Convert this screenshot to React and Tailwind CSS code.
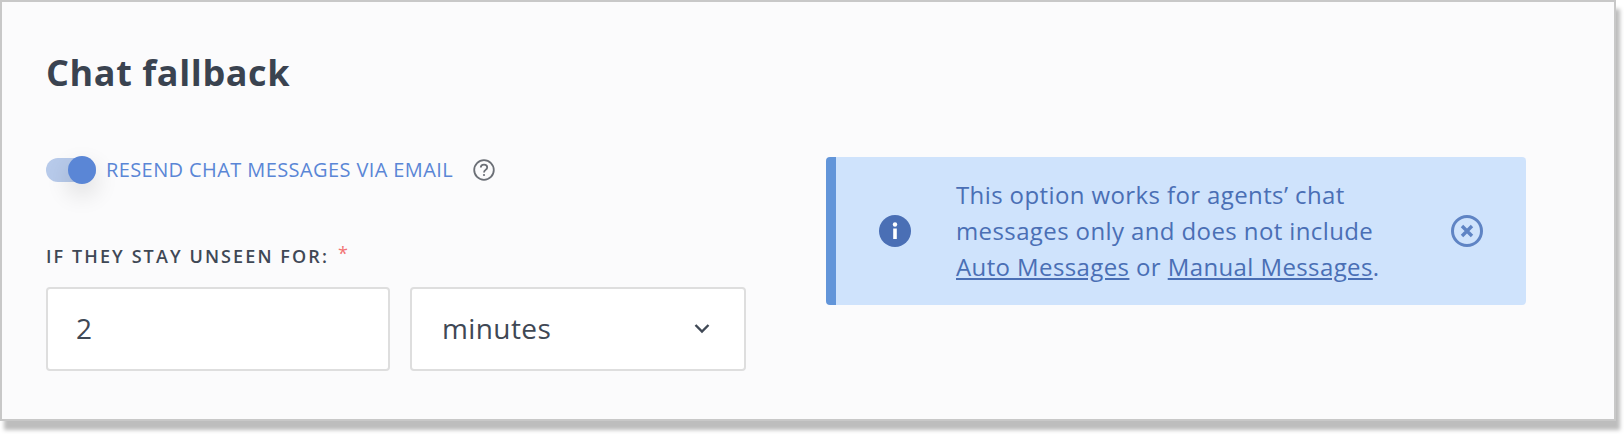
export default function App() {
  return (
    <div className="w-[1624px] h-[434px] bg-white overflow-hidden font-['Open_Sans',sans-serif]">
      <div className="w-[1616px] h-[421px] bg-[#fbfbfc] border-2 border-[#c8c8c8] shadow-[4px_9px_4px_0_#bdbdbd] pl-[44px] pt-[44px] flex flex-col">
        <h1 className="text-[36px] leading-[54px] font-bold tracking-[0.6px] text-[#3a4350]">Chat fallback</h1>
        <div className="flex gap-[76px] mt-[13px]">
          <div className="w-[704px] flex flex-col">
            <div className="flex items-center h-[28px] mt-[43px]">
              <div className="relative w-[50px] h-[24px] rounded-full bg-[#b7caea]">
                <div className="absolute left-[22px] top-[-2px] w-[28px] h-[28px] rounded-full bg-[#5a86d6] shadow-[0_10px_24px_rgba(0,0,0,0.14)]" />
              </div>
              <span className="ml-[10px] text-[20px] leading-[28px] font-medium tracking-[0.4px] text-[#5a86d6]">RESEND CHAT MESSAGES VIA EMAIL</span>
              <svg className="ml-[20px]" width="22" height="22" viewBox="0 0 22 22" fill="none">
                <circle cx="11" cy="11" r="9.8" stroke="#6b6f76" strokeWidth="1.8" />
                <path d="M7.8 8.6c0-1.9 1.4-3 3.2-3s3.2 1.1 3.2 2.8c0 2.5-3.2 2.5-3.2 5" stroke="#6b6f76" strokeWidth="1.8" />
                <circle cx="11" cy="16" r="1.1" fill="#6b6f76" />
              </svg>
            </div>
            <div className="flex items-start mt-[60px] h-[32px]">
              <span className="text-[18px] leading-[24px] font-semibold tracking-[2.1px] text-[#3f4855]">IF THEY STAY UNSEEN FOR:</span>
              <span className="ml-[9px] text-[18px] leading-[18px] text-[#f27272]">*</span>
            </div>
            <div className="flex gap-[20px] mt-[11px]">
              <div className="w-[344px] h-[84px] bg-white border-2 border-[#dedede] rounded-[4px] pl-[28px] pb-[2px] flex items-center text-[28px] tracking-[0.4px] text-[#3f4855]">2</div>
              <div className="w-[336px] h-[84px] bg-white border-2 border-[#dedede] rounded-[4px] pl-[30px] pr-[33px] pb-[2px] flex items-center justify-between text-[28px] tracking-[0.4px] text-[#3f4855]">
                <span>minutes</span>
                <svg width="18" height="11" viewBox="0 0 18 11" fill="none">
                  <path d="M2.5 2l6.5 6.5L15.5 2" stroke="#3f4855" strokeWidth="2.4" />
                </svg>
              </div>
            </div>
          </div>
          <div className="w-[700px] h-[148px] mt-[44px] bg-[#cfe3fc] rounded-[4px] border-l-[10px] border-[#6295d9] flex items-center pl-[43px]">
            <svg width="32" height="32" viewBox="0 0 32 32" className="shrink-0">
              <circle cx="16" cy="16" r="16" fill="#4a6fb5" />
              <circle cx="16" cy="9.5" r="2.2" fill="#fff" />
              <rect x="14.2" y="13.5" width="3.6" height="10.5" fill="#fff" />
            </svg>
            <p className="w-[447px] ml-[45px] text-[24px] leading-[36px] tracking-[0.39px] text-[#4a6fb5]">
              This option works for agents’ chat messages only and does not include <span className="underline">Auto Messages</span> or <span className="underline">Manual Messages</span>.
            </p>
            <svg width="32" height="32" viewBox="0 0 32 32" fill="none" className="shrink-0 ml-[48px]">
              <circle cx="16" cy="16" r="14.5" stroke="#5f84c4" strokeWidth="3" />
              <path d="M11 11l10 10M21 11l-10 10" stroke="#5f84c4" strokeWidth="3.4" />
            </svg>
          </div>
        </div>
      </div>
    </div>
  );
}
